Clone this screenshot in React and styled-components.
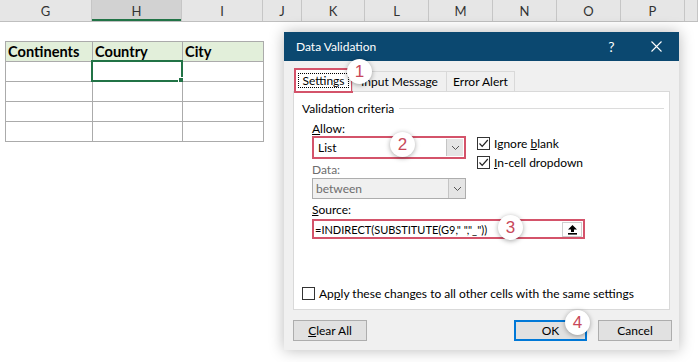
import React from 'react';
import styled, { createGlobalStyle } from 'styled-components';

const GlobalStyle = createGlobalStyle`
  body {
    margin: 0;
    background: #fff;
  }
`;

const Page = styled.div`
  position: relative;
  width: 698px;
  height: 362px;
  overflow: hidden;
  background: #fff;
  font-family: Lato, "Liberation Sans", sans-serif;
`;

/* ---------- spreadsheet ---------- */

const ColumnBar = styled.div`
  display: flex;
  height: 22px;
  box-sizing: border-box;
  background: #e6e6e6;
  border-bottom: 1px solid #bfbfbf;
`;

const ColumnHead = styled.div`
  flex: 0 0 ${p => p.$w}px;
  box-sizing: border-box;
  display: flex;
  align-items: center;
  justify-content: center;
  border-right: 1px solid #c6c6c6;
  font-size: 13px;
  color: #333;
  background: ${p => (p.$active ? '#d2d2d2' : 'transparent')};
  box-shadow: ${p => (p.$active ? 'inset 0 -2px 0 #217346' : 'none')};
`;

const Table = styled.div`
  display: grid;
  grid-template-columns: 87px 90px 81px;
  grid-auto-rows: 20px;
  margin: 19px 0 0 5px;
  width: max-content;
  border-left: 1px solid #ababab;
  border-top: 1px solid #ababab;
`;

const Cell = styled.div`
  position: relative;
  box-sizing: border-box;
  border-right: 1px solid #ababab;
  border-bottom: 1px solid #ababab;
  padding-left: 2px;
  display: flex;
  align-items: center;
  font-size: 14.6px;
  font-weight: ${p => (p.$head ? 700 : 400)};
  color: #000;
  background: ${p => (p.$head ? '#e2efda' : '#fff')};
`;

const Selection = styled.span`
  position: absolute;
  left: -2px;
  top: -2px;
  right: -1px;
  bottom: -1px;
  border: 2px solid #217346;
  &::after {
    content: '';
    position: absolute;
    right: -4px;
    bottom: -4px;
    width: 5px;
    height: 5px;
    background: #217346;
    border: 1px solid #fff;
  }
`;

/* ---------- dialog ---------- */

const Dialog = styled.div`
  position: absolute;
  left: 284px;
  top: 32px;
  width: 395px;
  height: 318px;
  display: flex;
  flex-direction: column;
  background: #f0f0f0;
  box-shadow: 0 0 14px rgba(0, 0, 0, 0.28);
  font-family: Lato, "Liberation Sans", sans-serif;
  font-size: 12px;
  color: #000;
`;

const TitleBar = styled.div`
  display: flex;
  align-items: center;
  height: 29px;
  flex: 0 0 29px;
  background: #0b4870;
  color: #fff;
  padding-left: 12px;
  font-size: 12px;
`;

const Title = styled.div`
  flex: 1;
`;

const TitleButton = styled.div`
  width: 45px;
  height: 29px;
  display: flex;
  align-items: center;
  justify-content: center;
  font-size: 14px;
`;

const Body = styled.div`
  flex: 1;
  display: flex;
  flex-direction: column;
  padding: 7px 9px 9px;
`;

const TabRow = styled.div`
  display: flex;
  align-items: flex-end;
  height: 23px;
  padding-left: 1px;
  position: relative;
  z-index: 1;
`;

const Tab = styled.div`
  position: relative;
  box-sizing: border-box;
  display: flex;
  align-items: center;
  justify-content: center;
  width: ${p => p.$w}px;
  height: ${p => (p.$active ? 25 : 20)}px;
  margin-bottom: ${p => (p.$active ? -2 : 0)}px;
  background: ${p => (p.$active ? '#fff' : '#f0f0f0')};
  border: ${p => (p.$active ? '2px solid #d4536a' : '1px solid #d9d9d9')};
  border-bottom: ${p => (p.$active ? '2px solid #d4536a' : 'none')};
  margin-left: ${p => (p.$active ? 0 : -1)}px;
`;

const FocusText = styled.span`
  outline: 1px dotted #000;
  padding: 0 3px;
  line-height: 13px;
`;

const Panel = styled.div`
  height: 219px;
  box-sizing: border-box;
  display: flex;
  flex-direction: column;
  background: #fff;
  border: 1px solid #d9d9d9;
  padding: 8px 5px 9px 8px;
`;

const Legend = styled.div`
  display: flex;
  align-items: center;
  gap: 5px;
  height: 16px;
  &::after {
    content: '';
    flex: 1;
    border-top: 1px solid #dcdcdc;
  }
`;

const Criteria = styled.div`
  display: flex;
  flex-direction: column;
  margin-left: 10px;
`;

const CriteriaRow = styled.div`
  display: flex;
`;

const LeftColumn = styled.div`
  display: flex;
  flex-direction: column;
  width: 154px;
`;

const Options = styled.div`
  display: flex;
  flex-direction: column;
  padding-top: 18px;
  margin-left: 11px;
`;

const Label = styled.div`
  height: 15px;
  line-height: 15px;
  margin-top: ${p => p.$mt || 0}px;
  margin-bottom: ${p => p.$mb || 0}px;
  color: ${p => (p.$muted ? '#6d6d6d' : '#000')};
`;

const Combo = styled.div`
  position: relative;
  box-sizing: border-box;
  display: flex;
  align-items: stretch;
  width: 154px;
  height: ${p => (p.$marked ? 23 : 21)}px;
  border: ${p => (p.$marked ? '2px solid #d4536a' : '1px solid #adadad')};
  background: ${p => (p.$disabled ? '#f0f0f0' : '#fff')};
  color: ${p => (p.$disabled ? '#6d6d6d' : '#000')};
  padding: ${p => (p.$marked ? '1px' : '0')};
`;

const ComboText = styled.div`
  flex: 1;
  display: flex;
  align-items: center;
  padding-left: 3px;
`;

const ArrowButton = styled.div`
  width: 16px;
  display: flex;
  align-items: center;
  justify-content: center;
  background: #e5e5e5;
  border-left: 1px solid #c4c4c4;
`;

const CheckRow = styled.div`
  display: flex;
  align-items: center;
  gap: 4px;
  height: 19px;
`;

const Box = styled.div`
  width: 13px;
  height: 13px;
  flex: 0 0 13px;
  box-sizing: border-box;
  border: 1px solid #333;
  background: #fff;
  display: flex;
  align-items: center;
  justify-content: center;
`;

const SourceField = styled.div`
  position: relative;
  box-sizing: border-box;
  display: flex;
  align-items: center;
  width: 273px;
  height: 20px;
  border: 2px solid #d4536a;
  padding: 0 1px 0 1px;
`;

const SourceText = styled.div`
  flex: 1;
  font-size: 11px;
`;

const PickButton = styled.div`
  width: 18px;
  height: 13px;
  display: flex;
  align-items: center;
  justify-content: center;
  background: #fff;
  border: 1px solid #cfcfcf;
`;

const Spacer = styled.div`
  flex: 1;
`;

const ApplyRow = styled(CheckRow)`
  height: 14px;
`;

const ButtonRow = styled.div`
  display: flex;
  margin-top: 10px;
  margin-right: -2px;
  gap: 11px;
`;

const Button = styled.div`
  position: relative;
  box-sizing: border-box;
  width: ${p => p.$w || 74}px;
  height: 21px;
  display: flex;
  align-items: center;
  justify-content: center;
  background: #e1e1e1;
  border: ${p => (p.$primary ? '2px solid #0078d7' : '1px solid #adadad')};
  margin-left: ${p => (p.$push ? 'auto' : '0')};
`;

const Badge = styled.div`
  position: absolute;
  left: ${p => p.$x}px;
  top: ${p => p.$y}px;
  width: 25px;
  height: 25px;
  border-radius: 50%;
  background: #fff;
  box-shadow: 0 1px 5px rgba(0, 0, 0, 0.35);
  display: flex;
  align-items: center;
  justify-content: center;
  color: #c8485a;
  font-family: "Liberation Sans", Arial, sans-serif;
  font-size: 17px;
  z-index: 3;
`;

const Chevron = () => (
  <svg width="9" height="6" viewBox="0 0 9 6">
    <polyline points="1,1 4.5,4.5 8,1" fill="none" stroke="#555" strokeWidth="1" />
  </svg>
);

const Check = () => (
  <svg width="11" height="11" viewBox="0 0 11 11">
    <polyline points="1.5,5.5 4.2,8.3 9.8,2" fill="none" stroke="#222" strokeWidth="1.2" />
  </svg>
);

const UpArrow = () => (
  <svg width="11" height="11" viewBox="0 0 11 11">
    <polygon points="5.5,1 10,5.5 7,5.5 7,8 4,8 4,5.5 1,5.5" fill="#000" />
    <rect x="1" y="9" width="9" height="1.6" fill="#000" />
  </svg>
);

const CloseIcon = () => (
  <svg width="11" height="11" viewBox="0 0 11 11">
    <path d="M0.5 0.5 L10.5 10.5 M10.5 0.5 L0.5 10.5" stroke="#fff" strokeWidth="1.1" />
  </svg>
);

const columns = [
  ['G', 92], ['H', 90, true], ['I', 81], ['J', 39], ['K', 63],
  ['L', 64], ['M', 64], ['N', 64], ['O', 64], ['P', 64], ['', 13],
];

const CheckBox = ({ checked }) => <Box>{checked && <Check />}</Box>;

export default function App() {
  return (
    <Page>
      <GlobalStyle />
      <ColumnBar>
        {columns.map(([name, w, active]) => (
          <ColumnHead key={name + w} $w={w} $active={active}>{name}</ColumnHead>
        ))}
      </ColumnBar>

      <Table>
        <Cell $head>Continents</Cell>
        <Cell $head>Country</Cell>
        <Cell $head>City</Cell>
        {[0, 1, 2, 3].map(r => (
          <React.Fragment key={r}>
            <Cell />
            <Cell>{r === 0 && <Selection />}</Cell>
            <Cell />
          </React.Fragment>
        ))}
      </Table>

      <Dialog>
        <TitleBar>
          <Title>Data Validation</Title>
          <TitleButton>?</TitleButton>
          <TitleButton><CloseIcon /></TitleButton>
        </TitleBar>
        <Body>
          <TabRow>
            <Tab $active $w={59}>
              <FocusText>Settings</FocusText>
              <Badge $x={51} $y={-11}>1</Badge>
            </Tab>
            <Tab $w={95}>Input Message</Tab>
            <Tab $w={69}>Error Alert</Tab>
          </TabRow>
          <Panel>
            <Legend>Validation criteria</Legend>
            <Criteria>
              <CriteriaRow>
                <LeftColumn>
                  <Label $mt={5}><u>A</u>llow:</Label>
                  <Combo $marked>
                    <ComboText>List</ComboText>
                    <ArrowButton><Chevron /></ArrowButton>
                    <Badge $x={76} $y={-6}>2</Badge>
                  </Combo>
                  <Label $muted $mt={3} $mb={1}>Data:</Label>
                  <Combo $disabled>
                    <ComboText>between</ComboText>
                    <ArrowButton><Chevron /></ArrowButton>
                  </Combo>
                </LeftColumn>
                <Options>
                  <CheckRow><CheckBox checked /><span>Ignore <u>b</u>lank</span></CheckRow>
                  <CheckRow><CheckBox checked /><span><u>I</u>n-cell dropdown</span></CheckRow>
                </Options>
              </CriteriaRow>
              <Label $mt={3} $mb={2}><u>S</u>ource:</Label>
              <SourceField>
                <SourceText>=INDIRECT(SUBSTITUTE(G9," ","_"))</SourceText>
                <PickButton><UpArrow /></PickButton>
                <Badge $x={184} $y={-6}>3</Badge>
              </SourceField>
            </Criteria>
            <Spacer />
            <ApplyRow>
              <CheckBox />
              <span>Ap<u>p</u>ly these changes to all other cells with the same settings</span>
            </ApplyRow>
          </Panel>
          <ButtonRow>
            <Button><span><u>C</u>lear All</span></Button>
            <Button $primary $w={73} $push>
              OK
              <Badge $x={49} $y={-12}>4</Badge>
            </Button>
            <Button>Cancel</Button>
          </ButtonRow>
        </Body>
      </Dialog>
    </Page>
  );
}
